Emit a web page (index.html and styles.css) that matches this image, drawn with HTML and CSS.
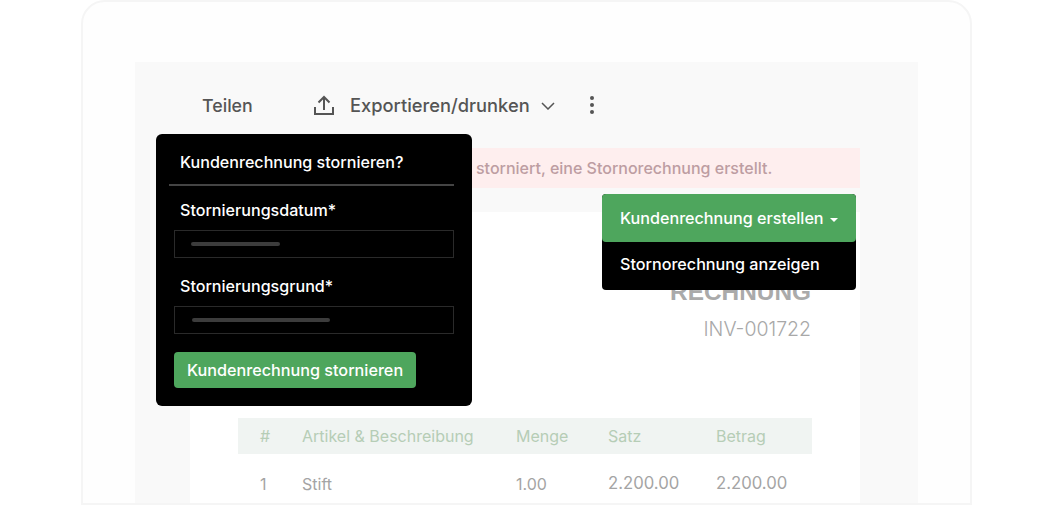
FILE: index.html
```html
<!DOCTYPE html>
<html lang="de">
<head>
<meta charset="utf-8">
<title>Kundenrechnung stornieren</title>
<link rel="stylesheet" href="styles.css">
</head>
<body>
<div class="frame">
  <div class="panel">
    <div class="toolbar">
      <span class="tool-share">Teilen</span>
      <svg class="icon-upload" width="20" height="20" viewBox="0 0 20 20" fill="none" stroke="#555" stroke-width="2"><path d="M1 12v7h18v-7"/><path d="M10 15V2"/><path d="M4.500 7.500 10 2l5.500 5.500"/></svg>
      <span class="tool-export">Exportieren/drunken</span>
      <svg class="icon-chevron" width="14" height="8" viewBox="0 0 14 8" fill="none" stroke="#555" stroke-width="1.500"><path d="M1 1l6 6 6-6"/></svg>
      <svg class="icon-more" width="4" height="18" viewBox="0 0 4 18" fill="#555"><circle cx="2" cy="2" r="2"/><circle cx="2" cy="9" r="2"/><circle cx="2" cy="16" r="2"/></svg>
    </div>
    <div class="alert">storniert, eine Stornorechnung erstellt.</div>
    <div class="doc">
      <div class="doc-title">RECHNUNG</div>
      <div class="doc-number">INV-001722</div>
      <div class="table">
        <div class="thead">
          <span class="c-num">#</span>
          <span class="c-item">Artikel &amp; Beschreibung</span>
          <span class="c-qty">Menge</span>
          <span class="c-rate">Satz</span>
          <span class="c-amount">Betrag</span>
        </div>
        <div class="trow">
          <span class="c-num">1</span>
          <span class="c-item">Stift</span>
          <span class="c-qty">1.00</span>
          <span class="c-rate up">2.200.00</span>
          <span class="c-amount up">2.200.00</span>
        </div>
      </div>
    </div>
  </div>
</div>

<div class="popover">
  <div class="pop-title">Kundenrechnung stornieren?</div>
  <div class="pop-body">
    <label class="pop-label">Stornierungsdatum*</label>
    <div class="pop-input"><span class="bar bar-date"></span></div>
    <label class="pop-label second">Stornierungsgrund*</label>
    <div class="pop-input"><span class="bar bar-reason"></span></div>
    <button class="pop-btn">Kundenrechnung stornieren</button>
  </div>
</div>

<div class="dropdown">
  <div class="drop-head">Kundenrechnung erstellen <span class="caret"></span></div>
  <div class="drop-item">Stornorechnung anzeigen</div>
</div>
</body>
</html>
```

FILE: styles.css
```css
* { box-sizing: border-box; }
html, body { margin: 0; height: 505px; overflow: hidden; background: #fff; }
body { position: relative; font-family: Inter, "Noto Sans", sans-serif; }

.frame {
  width: 891px;
  height: 505px;
  margin: 0 0 0 81px;
  padding: 60px 52px 0;
  border: 2px solid #f5f5f5;
  border-radius: 24px 24px 0 0;
  background: #fefefe;
}
.panel {
  height: 441px;
  background: #f9f9f9;
  padding: 0 58px 0 55px;
  overflow: hidden;
}
.toolbar {
  display: flex;
  align-items: center;
  height: 86px;
  padding-left: 12px;
  color: #555;
  font-weight: 500;
}
.tool-share { width: 112px; font-size: 17.800px; }
.tool-export { font-size: 18.300px; }
.icon-upload { margin-right: 16px; }
.icon-chevron { margin-left: 11px; margin-top: 2px; }
.icon-more { margin-left: 35px; }

.alert {
  height: 40px;
  background: #feeeee;
  color: #bd9da2;
  font-size: 16px;
  font-weight: 500;
  line-height: 40px;
  padding-left: 286px;
}
.doc {
  height: 291px;
  margin-top: 24px;
  background: #fff;
  padding: 67px 48px 0;
}
.doc-title {
  text-align: right;
  font-family: "Liberation Sans", sans-serif;
  font-size: 24.400px;
  font-weight: 700;
  color: #aaa;
  line-height: 26px;
  padding-right: 1px;
}
.doc-number {
  text-align: right;
  font-size: 19.500px;
  color: #a8a8a8;
  line-height: 24px;
  margin-top: 12px;
  padding-right: 1px;
  font-weight: 300;
}
.table { margin-top: 77px; font-size: 16px; width: 574px; }
.thead, .trow { display: flex; align-items: center; }
.thead { height: 36px; background: #f0f4f2; color: #b6cdb6; }
.trow { height: 60px; color: #a4a4a4; }
.c-num { width: 64px; padding-left: 22px; }
.c-item { width: 214px; }
.c-qty { width: 92px; }
.c-rate { width: 108px; }
.up { font-size: 16.700px; position: relative; top: -1px; }

.popover {
  position: absolute;
  left: 156px;
  top: 134px;
  width: 316px;
  height: 272px;
  background: #000;
  border-radius: 6px;
  color: #fff;
  padding: 0 18px 0 13px;
}
.pop-title {
  height: 52px;
  line-height: 57px;
  padding-left: 11px;
  border-bottom: 2px solid #444;
  font-size: 16.100px;
  font-weight: 500;
}
.pop-body { display: flex; flex-direction: column; align-items: flex-start; padding: 14px 0 0 5px; }
.pop-label { display: block; font-size: 16.100px; font-weight: 500; line-height: 20px; padding-left: 6px; }
.second { margin-top: 18px; }
.pop-input {
  display: flex;
  align-items: center;
  width: 280px;
  height: 28px;
  margin-top: 10px;
  border: 1px solid #2a2a2a;
  background: #000;
}
.bar { display: block; height: 4px; border-radius: 2px; background: #3c3c3c; }
.bar-date { width: 89px; margin-left: 16px; }
.bar-reason { width: 138px; margin-left: 17px; }
.pop-btn {
  margin-top: 18px;
  width: 242px;
  height: 36px;
  border: 0;
  border-radius: 4px;
  background: #4ea65d;
  color: #fff;
  font-family: inherit;
  font-size: 16.200px;
  font-weight: 500;
  padding: 0;
}

.dropdown {
  position: absolute;
  left: 602px;
  top: 194px;
  width: 254px;
  height: 96px;
  background: #000;
  border-radius: 4px;
  color: #fff;
  font-size: 16.150px;
  font-weight: 500;
}
.drop-head {
  height: 48px;
  line-height: 49px;
  padding-left: 18px;
  background: #4ea65d;
  border-radius: 4px;
}
.caret {
  display: inline-block;
  width: 0;
  height: 0;
  margin-left: 2px;
  vertical-align: 2px;
  border-left: 4.500px solid transparent;
  border-right: 4.500px solid transparent;
  border-top: 4px solid #fff;
}
.drop-item { height: 48px; line-height: 45px; padding-left: 18px; }
```
